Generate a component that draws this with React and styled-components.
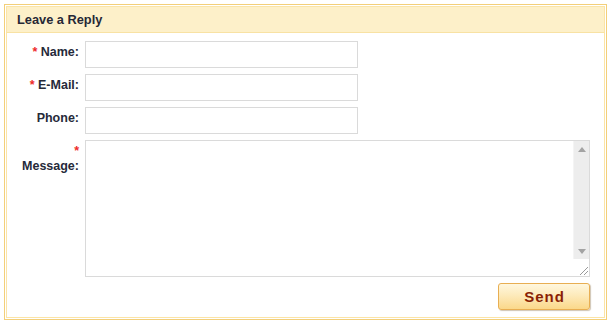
import React from "react";
import styled, { createGlobalStyle } from "styled-components";

const GlobalStyle = createGlobalStyle`
  html, body { margin: 0; padding: 0; background: #ffffff; }
  body { font-family: "Liberation Sans", Arial, sans-serif; }
  * { box-sizing: border-box; }
`;

const Outer = styled.div`
  margin: 4px 5px 4px 4px;
  border: 1px solid #f3cf79;
  padding: 1px;
  background: #ffffff;
`;

const Inner = styled.div`
  border: 1px solid #fbe4a6;
`;

const Header = styled.div`
  height: 26px;
  line-height: 25px;
  padding-left: 10px;
  background: #fdf0c9;
  border-bottom: 1px solid #f8e2a4;
  font-size: 12.8px;
  font-weight: bold;
  color: #262836;
`;

const Form = styled.form`
  display: grid;
  grid-template-columns: 62px 1fr;
  column-gap: 5px;
  row-gap: 6px;
  padding: 8px 14px 7px 11px;
  margin: 0;
`;

const Label = styled.label`
  text-align: right;
  font-size: 12.5px;
  font-weight: bold;
  line-height: 15px;
  padding: 4px 1px 0 0;
  color: #262a3a;
`;

const Req = styled.span`
  color: #ee2a2a;
`;

const TextInput = styled.input`
  width: 273px;
  height: 27px;
  border: 1px solid #dadada;
  background: #fff;
  padding: 0 4px;
  font: 12px "Liberation Sans", Arial, sans-serif;
  outline: none;
`;

const AreaBox = styled.div`
  display: flex;
  height: 137px;
  border: 1px solid #dadada;
  background: #fff;
`;

const Area = styled.textarea`
  flex: 1;
  border: none;
  resize: none;
  outline: none;
  padding: 3px 4px;
  font: 12px "Liberation Sans", Arial, sans-serif;
  overflow: hidden;
`;

const ScrollCol = styled.div`
  width: 16px;
  display: flex;
  flex-direction: column;
`;

const Track = styled.div`
  flex: 1;
  background: #ededed;
  border-left: 1px solid #f4f4f4;
  display: flex;
  flex-direction: column;
  justify-content: space-between;
  align-items: center;
  padding: 6px 0 5px;
`;

const Corner = styled.div`
  height: 17px;
  display: flex;
  align-items: flex-end;
  justify-content: flex-end;
  padding: 0 1px 1px 0;
`;

const Actions = styled.div`
  grid-column: 2;
  display: flex;
  justify-content: flex-end;
`;

const SendButton = styled.button`
  width: 92px;
  height: 27px;
  border: 1px solid #e8ae52;
  border-radius: 3px;
  background: linear-gradient(to bottom, #fff7de 0%, #fdeabb 45%, #fbd88a 100%);
  box-shadow: 1px 1px 1px rgba(120, 90, 40, 0.35);
  font-family: "Liberation Sans", Arial, sans-serif;
  font-size: 15px;
  font-weight: bold;
  letter-spacing: 1px;
  color: #8a1f05;
  padding: 0 0 0 1px;
  cursor: pointer;
`;

const Arrow = ({ up }) => (
  <svg width="8" height="5" viewBox="0 0 8 5">
    <polygon points={up ? "4,0 8,5 0,5" : "0,0 8,0 4,5"} fill="#a3a3a3" />
  </svg>
);

const Grip = () => (
  <svg width="9" height="9" viewBox="0 0 9 9">
    <line x1="1" y1="9" x2="9" y2="1" stroke="#9a9a9a" strokeWidth="1" />
    <line x1="5" y1="9" x2="9" y2="5" stroke="#9a9a9a" strokeWidth="1" />
  </svg>
);

const fields = [
  { id: "name", label: "Name:", required: true },
  { id: "email", label: "E-Mail:", required: true },
  { id: "phone", label: "Phone:", required: false },
];

export default function App() {
  return (
    <>
      <GlobalStyle />
      <Outer>
        <Inner>
          <Header>Leave a Reply</Header>
          <Form onSubmit={(e) => e.preventDefault()}>
            {fields.map((f) => (
              <React.Fragment key={f.id}>
                <Label htmlFor={f.id}>
                  {f.required && <Req>* </Req>}
                  {f.label}
                </Label>
                <TextInput id={f.id} type="text" />
              </React.Fragment>
            ))}
            <Label htmlFor="message">
              <Req>* </Req>Message:
            </Label>
            <AreaBox>
              <Area id="message" />
              <ScrollCol>
                <Track>
                  <Arrow up />
                  <Arrow />
                </Track>
                <Corner>
                  <Grip />
                </Corner>
              </ScrollCol>
            </AreaBox>
            <Actions>
              <SendButton type="submit">Send</SendButton>
            </Actions>
          </Form>
        </Inner>
      </Outer>
    </>
  );
}
